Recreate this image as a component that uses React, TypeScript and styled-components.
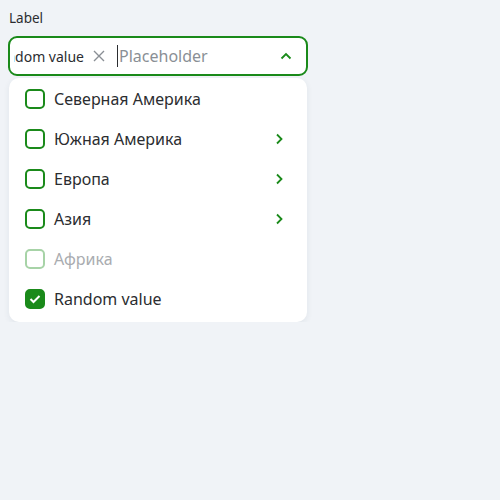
import { FC } from 'react';
import styled, { createGlobalStyle } from 'styled-components';

const GlobalStyle = createGlobalStyle`
  body {
    margin: 0;
    background: #f0f3f7;
    font-family: "Noto Sans", "Open Sans", sans-serif;
  }
`

const items = [
  { label: 'Северная Америка', nested: false, disabled: false, checked: false },
  { label: 'Южная Америка', nested: true, disabled: false, checked: false },
  { label: 'Европа', nested: true, disabled: false, checked: false },
  { label: 'Азия', nested: true, disabled: false, checked: false },
  { label: 'Африка', nested: false, disabled: true, checked: false },
  { label: 'Random value', nested: false, disabled: false, checked: true },
]

const App: FC = () => {
  return (
    <>
      <GlobalStyle />
      <WrapperSC>
        <LabelSC>Label</LabelSC>
        <FieldSC>
          <TagsSC>
            <TagSC>Random value</TagSC>
          </TagsSC>
          <ClearSC>
            <svg width="14" height="14" viewBox="0 0 14 14">
              <path d="M2 2 L12 12 M12 2 L2 12" stroke="#8a8f95" strokeWidth="1.4" fill="none" />
            </svg>
          </ClearSC>
          <InputSC placeholder="Placeholder" />
          <svg width="12" height="8" viewBox="0 0 12 8">
            <path d="M1.5 6.5 L6 2 L10.5 6.5" stroke="#1a8a1a" strokeWidth="1.8" fill="none" />
          </svg>
        </FieldSC>
        <MenuSC>
          {items.map(item => (
            <ItemSC key={item.label} disabled={item.disabled}>
              <BoxSC checked={item.checked} disabled={item.disabled}>
                {item.checked && (
                  <svg width="12" height="10" viewBox="0 0 12 10">
                    <path d="M1.5 5 L4.5 8 L10.5 2" stroke="#fff" strokeWidth="2" fill="none" />
                  </svg>
                )}
              </BoxSC>
              <ItemTextSC>{item.label}</ItemTextSC>
              {item.nested && (
                <svg width="8" height="12" viewBox="0 0 8 12">
                  <path d="M2 1.5 L6.5 6 L2 10.5" stroke="#1a8a1a" strokeWidth="1.8" fill="none" />
                </svg>
              )}
            </ItemSC>
          ))}
        </MenuSC>
      </WrapperSC>
    </>
  );
};

export default App;

const WrapperSC = styled('div')`
  width: 300px;
  padding: 8px 0 0 8px;
  display: flex;
  flex-direction: column;
`

const LabelSC = styled('div')`
  font-size: 13.5px;
  color: #2b2d30;
  padding-left: 1px;
  line-height: 20px;
  margin-bottom: 8px;
`

const FieldSC = styled('div')`
  box-sizing: border-box;
  height: 40px;
  background: #fff;
  border: 2px solid #1a8a1a;
  border-radius: 9px;
  display: flex;
  align-items: center;
  padding: 0 14px 0 4px;
  gap: 8px;
`

const TagsSC = styled('div')`
  width: 70px;
  overflow: hidden;
  display: flex;
  justify-content: flex-end;
  flex-shrink: 0;
`

const TagSC = styled('span')`
  white-space: nowrap;
  font-size: 14px;
  color: #2b2d30;
`

const ClearSC = styled('span')`
  display: flex;
  align-items: center;
  margin-right: 3px;
`

const InputSC = styled('input')`
  flex: 1;
  min-width: 0;
  border: none;
  outline: none;
  padding: 0 0 0 1px;
  border-left: 1px solid #2b2d30;
  font-family: inherit;
  font-size: 16px;
  color: #2b2d30;
  &::placeholder {
    color: #8a8f95;
  }
`

const MenuSC = styled('div')`
  margin: 2px 0 0 1px;
  width: 298px;
  background: #fff;
  border-radius: 10px;
  box-shadow: 0 2px 6px rgba(40, 60, 90, 0.08);
  padding: 1px 0 3px;
`

const ItemSC = styled('div') <{ disabled: boolean }>`
  height: 40px;
  display: flex;
  align-items: center;
  gap: 9px;
  padding: 0 24px 0 16px;
  color: ${p => p.disabled ? '#a9acb0' : '#2b2d30'};
`

const BoxSC = styled('div') <{ checked: boolean, disabled: boolean }>`
  box-sizing: border-box;
  width: 20px;
  height: 20px;
  border-radius: 5px;
  border: 2px solid ${p => p.disabled ? '#a7d3a7' : '#1a8a1a'};
  background: ${p => p.checked ? '#1a8a1a' : '#fff'};
  display: flex;
  align-items: center;
  justify-content: center;
`

const ItemTextSC = styled('span')`
  flex: 1;
  font-size: 16px;
`
